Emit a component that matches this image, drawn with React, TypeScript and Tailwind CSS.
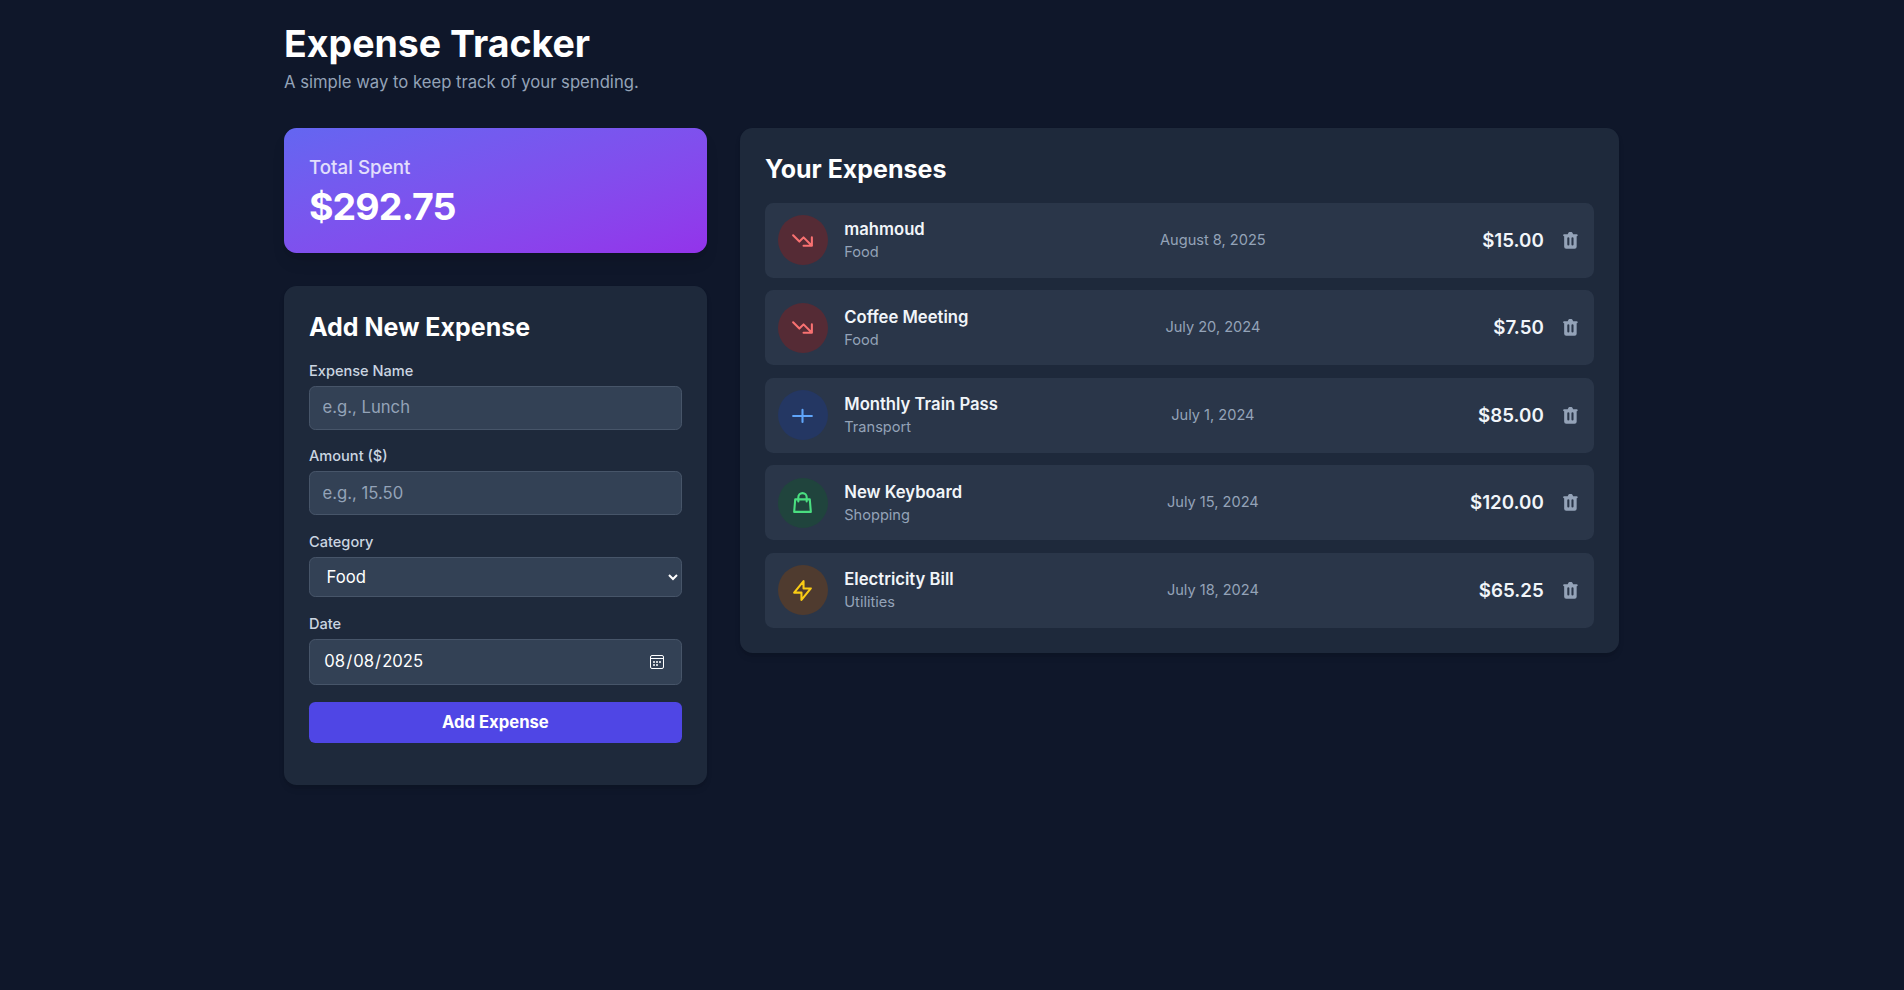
import type { ReactNode } from 'react';

type Category = 'Food' | 'Transport' | 'Shopping' | 'Utilities';

interface Expense {
  name: string;
  category: Category;
  date: string;
  amount: string;
}

const expenses: Expense[] = [
  { name: 'mahmoud', category: 'Food', date: 'August 8, 2025', amount: '$15.00' },
  { name: 'Coffee Meeting', category: 'Food', date: 'July 20, 2024', amount: '$7.50' },
  { name: 'Monthly Train Pass', category: 'Transport', date: 'July 1, 2024', amount: '$85.00' },
  { name: 'New Keyboard', category: 'Shopping', date: 'July 15, 2024', amount: '$120.00' },
  { name: 'Electricity Bill', category: 'Utilities', date: 'July 18, 2024', amount: '$65.25' },
];

const badgeStyles: Record<Category, string> = {
  Food: 'bg-[#552b35] text-[#f87171]',
  Transport: 'bg-[#243763] text-[#60a5fa]',
  Shopping: 'bg-[#20443d] text-[#4ade80]',
  Utilities: 'bg-[#4f3b2f] text-[#facc15]',
};

const iconPaths: Record<Category, string> = {
  Food: 'M13 17h8m0 0V9m0 8l-8-8-4 4-6-6',
  Transport: 'M3 12.5h18M12 6.6v11.6',
  Shopping: 'M16 11V7a4 4 0 00-8 0v4M5 9h14l1 12H4L5 9z',
  Utilities: 'M13 10V3L4 14h7v7l9-11h-7z',
};

const fieldClass = 'block w-full rounded-md border border-[#475569] bg-[#334155] text-base text-white';

function CategoryIcon({ category }: { category: Category }) {
  return (
    <svg className="size-6" viewBox="0 0 24 24" fill="none" stroke="currentColor" strokeWidth="2" strokeLinecap="round" strokeLinejoin="round">
      <path d={iconPaths[category]} />
    </svg>
  );
}

function TrashIcon() {
  return (
    <svg className="size-5" viewBox="0 0 20 20" fill="currentColor">
      <path
        fillRule="evenodd"
        d="M9 2a1 1 0 00-.894.553L7.382 4H4a1 1 0 000 2v10a2 2 0 002 2h8a2 2 0 002-2V6a1 1 0 100-2h-3.382l-.724-1.447A1 1 0 0011 2H9zM7 8a1 1 0 012 0v6a1 1 0 11-2 0V8zm5-1a1 1 0 00-1 1v6a1 1 0 102 0V8a1 1 0 00-1-1z"
        clipRule="evenodd"
      />
    </svg>
  );
}

function CalendarIcon() {
  return (
    <svg className="size-[13.44px] shrink-0" viewBox="0 0 14 14" fill="none" stroke="white">
      <rect x="0.5" y="0.5" width="13" height="13" rx="1.5" />
      <path d="M0.5 3.5h13" />
      <path d="M3 7h2M6 7h2M9 7h2M3 10h2M6 10h2" strokeWidth="2" strokeOpacity="0.75" />
    </svg>
  );
}

function Field({ label, children }: { label: string; children: ReactNode }) {
  return (
    <div className="mb-4">
      <label className="mb-1 block text-sm font-medium text-[#cbd5e1]">{label}</label>
      {children}
    </div>
  );
}

function ExpenseRow({ expense }: { expense: Expense }) {
  return (
    <li className="flex h-[72px] items-center rounded-lg bg-[#2a3649] p-3">
      <div className="flex w-[300px] items-center gap-4">
        <div className={`flex size-12 items-center justify-center rounded-full ${badgeStyles[expense.category]}`}>
          <CategoryIcon category={expense.category} />
        </div>
        <div>
          <p className="font-semibold text-[#f1f5f9]">{expense.name}</p>
          <p className="text-sm text-[#94a3b8]">{expense.category}</p>
        </div>
      </div>
      <p className="flex-1 text-center text-sm text-[#94a3b8]">{expense.date}</p>
      <div className="flex w-[236px] items-center justify-end gap-[15.2px] pr-px">
        <p className="text-lg font-semibold text-[#f1f5f9]">{expense.amount}</p>
        <button className="text-[#94a3b8]" aria-label="Delete">
          <TrashIcon />
        </button>
      </div>
    </li>
  );
}

export default function App() {
  return (
    <div className="min-h-screen overflow-hidden bg-[#0f172a] pr-px font-['Inter',sans-serif] text-white">
      <div className="mx-auto w-[1281.6px] pt-[22px] [zoom:1.04167]">
        <header className="mb-8">
          <h1 className="text-4xl font-bold">Expense Tracker</h1>
          <p className="mt-[4.8px] text-[#94a3b8]">A simple way to keep track of your spending.</p>
        </header>
        <div className="grid grid-cols-3 items-start gap-8">
          <div className="flex flex-col gap-8">
            <section className="rounded-xl bg-linear-to-br from-[#6366f1] to-[#9333ea] p-6 shadow-lg">
              <h2 className="text-lg font-medium text-white/80">Total Spent</h2>
              <p className="mt-1 text-4xl font-bold tracking-tight">$292.75</p>
            </section>
            <section className="rounded-xl bg-[#1e293b] p-6 shadow-md">
              <h2 className="mb-4 text-2xl font-bold">Add New Expense</h2>
              <form className="mb-4">
                <Field label="Expense Name">
                  <input type="text" placeholder="e.g., Lunch" className={`${fieldClass} px-3 py-2 placeholder:text-[#94a3b8]`} />
                </Field>
                <Field label="Amount ($)">
                  <input type="text" placeholder="e.g., 15.50" className={`${fieldClass} px-3 py-2 placeholder:text-[#94a3b8]`} />
                </Field>
                <Field label="Category">
                  <select className={`${fieldClass} h-[38.9px] px-3 py-2`} defaultValue="Food">
                    <option>Food</option>
                    <option>Transport</option>
                    <option>Shopping</option>
                    <option>Utilities</option>
                  </select>
                </Field>
                <Field label="Date">
                  <div className={`${fieldClass} h-[44.3px]`}>
                    <div className="flex h-full items-center pr-4 pl-[12.8px]">
                      <input
                        type="date"
                        defaultValue="2025-08-08"
                        className="min-w-0 flex-1 bg-transparent [&::-webkit-calendar-picker-indicator]:hidden"
                      />
                      <CalendarIcon />
                    </div>
                  </div>
                </Field>
                <button type="button" className="block w-full rounded-md bg-[#4f46e5] px-4 py-2 font-bold">
                  Add Expense
                </button>
              </form>
            </section>
          </div>
          <section className="col-span-2 rounded-xl bg-[#1e293b] p-6 shadow-md">
            <h2 className="mb-4 text-2xl font-bold">Your Expenses</h2>
            <ul className="space-y-3">
              {expenses.map((expense) => (
                <ExpenseRow key={expense.name} expense={expense} />
              ))}
            </ul>
          </section>
        </div>
      </div>
    </div>
  );
}
